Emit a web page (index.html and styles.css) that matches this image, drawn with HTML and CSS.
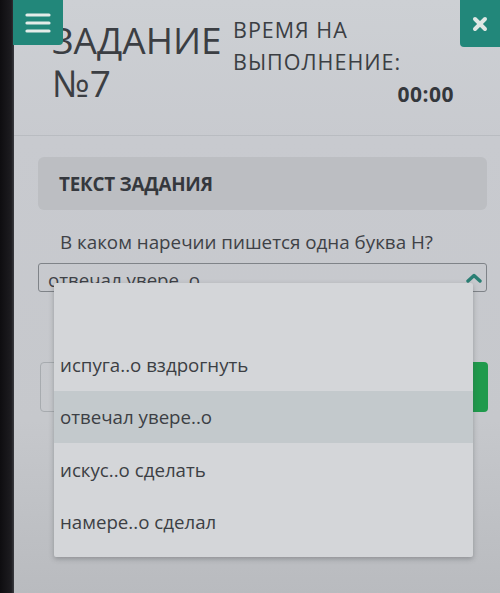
FILE: index.html
```html
<!DOCTYPE html>
<html lang="ru">
<head>
<meta charset="utf-8">
<title>Задание №7</title>
<link rel="stylesheet" href="styles.css">
</head>
<body>
<div class="frame">
  <div class="bezel"></div>
  <div class="screen">
    <header class="header">
      <button class="menu-btn" aria-label="Меню">
        <svg width="26" height="20" viewBox="0 0 26 20"><g stroke="#e4ece9" stroke-width="3.2" stroke-linecap="round"><line x1="2" y1="2" x2="24" y2="2"/><line x1="2" y1="10" x2="24" y2="10"/><line x1="2" y1="18" x2="24" y2="18"/></g></svg>
      </button>
      <div class="title">
        <div class="title-line">ЗАДАНИЕ</div>
        <div class="title-line">№7</div>
      </div>
      <div class="time">
        <div class="time-label">ВРЕМЯ НА<br>ВЫПОЛНЕНИЕ:</div>
        <div class="time-value">00:00</div>
      </div>
      <button class="close-btn" aria-label="Закрыть">
        <svg width="16" height="16" viewBox="0 0 16 16"><g stroke="#dfe7e4" stroke-width="4" stroke-linecap="round"><line x1="3" y1="3" x2="13" y2="13"/><line x1="13" y1="3" x2="3" y2="13"/></g></svg>
      </button>
    </header>
    <main class="content">
      <div class="task-box">ТЕКСТ ЗАДАНИЯ</div>
      <p class="question">В каком наречии пишется одна буква Н?</p>
      <div class="select-wrap">
        <div class="select">
          <span class="select-value">отвечал увере..о</span>
          <svg class="chevron" width="16" height="10" viewBox="0 0 16 10"><polyline points="2,8 8,2.5 14,8" fill="none" stroke="#2a7f74" stroke-width="3.4" stroke-linecap="round" stroke-linejoin="round"/></svg>
        </div>
        <ul class="dropdown">
          <li class="opt opt-empty"></li>
          <li class="opt">испуга..о вздрогнуть</li>
          <li class="opt opt-active">отвечал увере..о</li>
          <li class="opt">искус..о сделать</li>
          <li class="opt">намере..о сделал</li>
        </ul>
      </div>
      <div class="answer-row">
        <div class="answer-box"></div>
        <button class="answer-btn">Ответить</button>
      </div>
    </main>
  </div>
</div>
</body>
</html>
```
FILE: styles.css
```css
* { box-sizing: border-box; }
html, body { margin: 0; padding: 0; }
body {
  width: 500px;
  height: 593px;
  overflow: hidden;
  font-family: "Open Sans", "Liberation Sans", sans-serif;
  color: #3a3d42;
  background: #c5c7cb;
}
.frame {
  display: flex;
  height: 593px;
}
.bezel {
  width: 14px;
  flex: none;
  background: linear-gradient(90deg, #0e0d10, #1d1c20 80%, #3a3b40);
}
.screen {
  flex: 1;
  display: flex;
  flex-direction: column;
  background: linear-gradient(180deg, #cdd0d4 0px, #c8cacf 140px, #c6c8cc 420px, #b9bbbf 593px);
}
.header {
  position: relative;
  display: flex;
  height: 136px;
  flex: none;
  border-bottom: 1px solid #b9bcc1;
}
.menu-btn {
  position: absolute;
  top: 0;
  left: -1px;
  width: 50px;
  height: 45px;
  border: 0;
  padding: 0;
  background: #22877a;
  border-radius: 0 0 4px 0;
  display: flex;
  align-items: center;
  justify-content: center;
  z-index: 1;
}
.close-btn {
  position: absolute;
  top: 0;
  right: 0;
  width: 40px;
  height: 47px;
  border: 0;
  padding: 0;
  background: #22877a;
  border-radius: 0 0 0 4px;
  display: flex;
  align-items: center;
  justify-content: center;
}
.title {
  width: 180px;
  margin-left: 38px;
  padding-top: 18px;
  font-size: 37px;
  font-weight: 400;
  color: #3b3e43;
}
.title-line {
  height: 43px;
  line-height: 43px;
}
.time {
  width: 220px;
  margin-left: 1px;
  padding-top: 14px;
}
.time-label {
  font-size: 21.5px;
  line-height: 32px;
  letter-spacing: 1px;
  color: #3b3e43;
}
.time-value {
  margin-top: 4px;
  margin-right: -1px;
  text-align: right;
  font-size: 21px;
  line-height: 24px;
  font-weight: 700;
  letter-spacing: 0.5px;
  color: #34373c;
}
.content {
  padding: 21px 13px 0 24px;
}
.task-box {
  height: 53px;
  display: flex;
  align-items: center;
  padding-left: 21px;
  background: #bcbec2;
  border-radius: 6px;
  font-size: 18.8px;
  font-weight: 700;
  color: #35383d;
  letter-spacing: -0.2px;
}
.question {
  margin: 20px 0 0;
  padding-left: 22px;
  font-size: 18.8px;
  line-height: 24px;
  color: #3e4146;
}
.select-wrap {
  position: relative;
  margin-top: 9px;
}
.select {
  height: 29px;
  border: 1px solid #7f8388;
  border-radius: 3px;
  padding: 6px 0 0 9px;
  display: flex;
  justify-content: space-between;
  font-size: 18.7px;
  line-height: 20px;
  color: #3e4146;
}
.chevron {
  margin: 3px 4px 0 0;
}
.dropdown {
  position: absolute;
  top: 20px;
  left: 16px;
  right: 14px;
  z-index: 2;
  margin: 0;
  padding: 0 0 9px;
  list-style: none;
  background: #d4d6d9;
  border-radius: 2px;
  box-shadow: 0 2px 5px rgba(60, 62, 66, 0.35);
}
.opt {
  height: 52.5px;
  display: flex;
  align-items: center;
  padding-left: 6px;
  font-size: 18.7px;
  color: #3c3f44;
}
.opt-empty {
  height: 55px;
}
.opt-active {
  background: #c3c9cc;
}
.answer-row {
  display: flex;
  margin-top: 70px;
  margin-left: 2px;
  height: 50px;
}
.answer-box {
  flex: 1;
  border: 1px solid #a7abaf;
  border-radius: 4px;
}
.answer-btn {
  width: 120px;
  margin-left: 6px;
  margin-right: -1px;
  border: 0;
  border-radius: 4px;
  background: #1f9a4c;
  color: #ffffff;
  font-family: inherit;
  font-size: 16px;
}
```
